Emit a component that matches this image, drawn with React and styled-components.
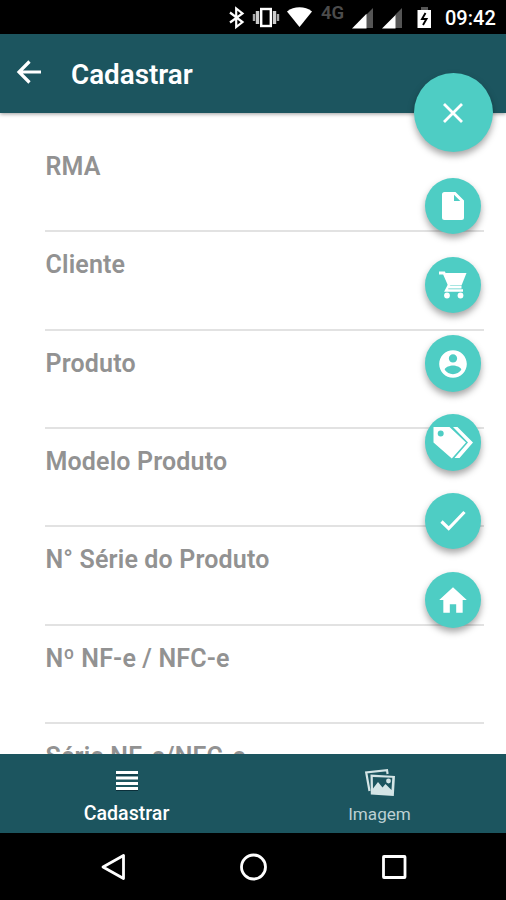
import React from 'react'
import styled, { createGlobalStyle } from 'styled-components'
import { IoMdContact, IoMdHome } from 'react-icons/io'

const fields = [
    'RMA',
    'Cliente',
    'Produto',
    'Modelo Produto',
    'N° Série do Produto',
    'Nº NF-e / NFC-e',
    'Série NF-e/NFC-e',
]

const StatusIcons = () => (
    <svg width="220" height="34" viewBox="226 0 220 34">
        <path d="M230 12.500l12.500 9.500-6.300 5V8.500l6.300 5L230 22.500" fill="none" stroke="#fff" strokeWidth="2.200" />
        <rect x="261.200" y="9" width="9.600" height="17" fill="none" stroke="#fff" strokeWidth="2.400" />
        <path d="M257.500 11v13M274.500 11v13" stroke="#ccc" strokeWidth="3.400" />
        <path d="M254 14v7M278 14v7" stroke="#aaa" strokeWidth="2.400" />
        <path d="M287 11.500c7-5.600 18-5.600 25 0L299.500 27z" fill="#fff" />
        <path d="M366 15v13h7V8z" fill="#555" />
        <path d="M352 28.500L366.500 13.800V28.500z" fill="#fff" />
        <path d="M395 15v13h7V8z" fill="#555" />
        <path d="M382 28.500L395.500 15V28.500z" fill="#fff" />
        <path d="M421 7h7v3h-7z" fill="#555" />
        <path d="M417.500 10H431v18h-13.500z" fill="#fff" />
        <path d="M425.500 13l-3.500 6h4.500l-3.500 6" fill="none" stroke="#000" strokeWidth="1.900" />
    </svg>
)

const BackIcon = () => (
    <svg width="26" height="26" viewBox="0 0 26 26">
        <path d="M13.500 2.500L3 13l10.500 10.500M3 13h22" fill="none" stroke="#fff" strokeWidth="3.200" />
    </svg>
)

const CloseIcon = () => (
    <svg width="22" height="22" viewBox="0 0 22 22">
        <path d="M2 2l18 18M20 2L2 20" stroke="#fff" strokeWidth="2.800" />
    </svg>
)

const DocumentIcon = () => (
    <svg width="24" height="30" viewBox="0 0 24 30">
        <path
            fillRule="evenodd"
            d="M3.500 1H14.500L23 9.500V26.500a2.500 2.500 0 0 1-2.500 2.500H3.500A2.500 2.500 0 0 1 1 26.500V3.500A2.500 2.500 0 0 1 3.500 1zM13 3.800V10h6.300z"
            fill="#fff"
        />
    </svg>
)

const CartIcon = () => (
    <svg width="30" height="28" viewBox="0 0 30 28">
        <path d="M1 2h5l5.500 12.500" fill="none" stroke="#fff" strokeWidth="2.800" />
        <path d="M7 2H28.500L23.500 14.500H11z" fill="#fff" />
        <path d="M11 14l-2.800 5.500H25M11 16.300h12.500" fill="none" stroke="#fff" strokeWidth="2.600" />
        <circle cx="9" cy="24.500" r="2.900" fill="#fff" />
        <circle cx="22.500" cy="24.500" r="2.900" fill="#fff" />
    </svg>
)

const TagsIcon = () => (
    <svg width="42" height="36" viewBox="0 0 42 36">
        <path
            fillRule="evenodd"
            d="M1.500 3H17.500L34 18.500 19.800 34.500 1.500 18.500zM8.700 6.500a3 3 0 1 0 0 6 3 3 0 0 0 0-6z"
            fill="#fff"
        />
        <path d="M21 3h4.500L41 18.500 27.500 34h-5L36 18.500z" fill="#fff" />
    </svg>
)

const CheckIcon = () => (
    <svg width="26" height="22" viewBox="0 0 26 22">
        <path d="M1.500 11.500l7.200 7L24.500 2" fill="none" stroke="#fff" strokeWidth="3.200" />
    </svg>
)

const ListIcon = () => (
    <svg width="22" height="20" viewBox="0 0 22 20">
        <path d="M0 1.500h22M0 7h22M0 12.500h22M0 17.500h22" stroke="#fff" strokeWidth="3" />
        <path d="M0 4h22M0 19.500h22" stroke="#0b2f3a" strokeWidth="1" />
    </svg>
)

const ImagesIcon = () => (
    <svg width="32" height="30" viewBox="0 0 32 30">
        <path d="M5.500 23L2.200 4.400 23 2.200l.6 3.800" fill="none" stroke="#d4e5e6" strokeWidth="2.200" />
        <path
            fillRule="evenodd"
            d="M6.500 6.500L31 8 29.800 28 6.800 26.500zM8.800 9L9 20.500l5-6.500 4.500 5.500 3-3.500 6 6 .8-12.200z"
            fill="#d4e5e6"
        />
        <circle cx="24.500" cy="13" r="2.400" fill="#d4e5e6" />
    </svg>
)

const actions = [
    { name: 'document', icon: <DocumentIcon /> },
    { name: 'cart', icon: <CartIcon /> },
    { name: 'contact', icon: <IoMdContact size={34} /> },
    { name: 'tags', icon: <TagsIcon /> },
    { name: 'check', icon: <CheckIcon /> },
    { name: 'home', icon: <IoMdHome size={34} /> },
]

const App = () => {
    return (
        <>
            <GlobalStyle />
            <Screen>
                <StatusBar>
                    <StatusIcons />
                    <Network>4G</Network>
                    <Clock>09:42</Clock>
                </StatusBar>

                <Header>
                    <BackIcon />
                    <h1>Cadastrar</h1>
                </Header>

                <Form>
                    {fields.map((label) => (
                        <Field key={label}>{label}</Field>
                    ))}
                </Form>

                <Tabs>
                    <Tab $active>
                        <ListIcon />
                        <span>Cadastrar</span>
                    </Tab>
                    <Tab>
                        <ImagesIcon />
                        <span>Imagem</span>
                    </Tab>
                </Tabs>

                <NavBar>
                    <svg width="28" height="30" viewBox="0 0 28 30">
                        <path d="M24.500 3.500v23L4 15z" fill="none" stroke="#fff" strokeWidth="2.800" strokeLinejoin="round" />
                    </svg>
                    <svg width="28" height="30" viewBox="0 0 28 30">
                        <circle cx="13.500" cy="15" r="12" fill="none" stroke="#fff" strokeWidth="2.800" />
                    </svg>
                    <svg width="28" height="30" viewBox="0 0 28 30">
                        <rect x="3.500" y="4.500" width="21.500" height="21" rx="0.500" fill="none" stroke="#fff" strokeWidth="2.800" />
                    </svg>
                </NavBar>

                <FabList>
                    <Fab $main>
                        <CloseIcon />
                    </Fab>
                    {actions.map((action) => (
                        <Fab key={action.name}>{action.icon}</Fab>
                    ))}
                </FabList>
            </Screen>
        </>
    )
}

const GlobalStyle = createGlobalStyle`
  body {
    margin: 0;
    background: #000;
    font-family: Roboto, "Liberation Sans", sans-serif;
  }

  * {
    box-sizing: border-box;
  }
`

const Screen = styled.div`
  position: relative;
  display: flex;
  flex-direction: column;
  width: 506px;
  height: 900px;
  overflow: hidden;
  background: #fff;
`

const StatusBar = styled.div`
  position: relative;
  display: flex;
  align-items: center;
  flex: 0 0 34px;
  padding-left: 226px;
  background: #000;
  color: #fff;

  svg {
    flex: none;
  }
`

const Network = styled.span`
  position: absolute;
  left: 321px;
  top: 2px;
  color: #4c4c4c;
  font-size: 18.5px;
  line-height: 22px;
  font-weight: 600;
`

const Clock = styled.span`
  margin-left: -1px;
  padding-top: 2px;
  font-size: 20px;
  font-weight: 500;
  line-height: 24px;
`

const Header = styled.header`
  position: relative;
  z-index: 1;
  display: flex;
  align-items: center;
  flex: 0 0 79px;
  padding-left: 16px;
  background: #1c555f;
  color: #fff;
  box-shadow: 0 1px 4px rgba(0, 0, 0, 0.4);

  svg {
    margin-bottom: 3px;
  }

  h1 {
    margin: 2px 0 0 29px;
    font-size: 27.8px;
    font-weight: 600;
    line-height: 34px;
  }
`

const Form = styled.main`
  flex: 1;
  min-height: 0;
  overflow: hidden;
  padding: 20.7px 22px 0 45px;
`

const Field = styled.div`
  height: 98.45px;
  padding: 18px 0 0 0.5px;
  border-bottom: 2px solid #e2e2e2;
  color: #929292;
  font-size: 25px;
  font-weight: 600;
  letter-spacing: 0.16px;
  line-height: 30px;
`

const Tabs = styled.nav`
  display: grid;
  grid-template-columns: 1fr 1fr;
  flex: 0 0 79px;
  background: #1c555f;
`

const Tab = styled.div`
  display: flex;
  flex-direction: column;
  align-items: center;
  justify-content: flex-end;
  gap: ${(props) => (props.$active ? '11px' : '4px')};
  padding-bottom: 7px;
  color: ${(props) => (props.$active ? '#fff' : '#bdd0d3')};

  span {
    font-size: ${(props) => (props.$active ? '19.6px' : '17.1px')};
    font-weight: ${(props) => (props.$active ? 500 : 400)};
    line-height: 24px;
  }
`

const NavBar = styled.div`
  display: flex;
  align-items: center;
  justify-content: space-between;
  flex: 0 0 67px;
  padding: 0 98px 0 99px;
  background: #000;
`

const FabList = styled.div`
  position: absolute;
  z-index: 2;
  top: 73px;
  right: 13.5px;
  display: flex;
  flex-direction: column;
  align-items: center;
  gap: 22.3px;
`

const Fab = styled.button`
  display: flex;
  align-items: center;
  justify-content: center;
  width: ${(props) => (props.$main ? '79px' : '56.5px')};
  height: ${(props) => (props.$main ? '79px' : '56.5px')};
  margin-bottom: ${(props) => (props.$main ? '3.5px' : '0')};
  padding: 0;
  border: none;
  border-radius: 50%;
  background: #4ecdc4;
  color: #fff;
  box-shadow: 0 4px 7px rgba(0, 0, 0, 0.35);

  svg {
    flex: none;
  }
`

export default App
